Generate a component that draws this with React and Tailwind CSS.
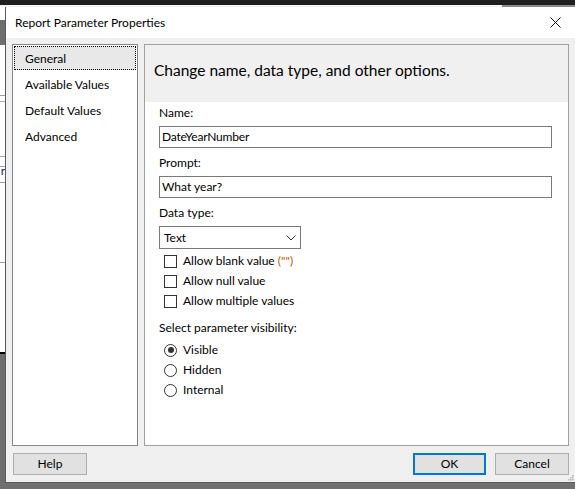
import { useState } from 'react';

const font = { fontFamily: 'Lato, "Noto Sans", sans-serif' };

function Checkbox({ label, extra }) {
  return (
    <div className="flex items-center h-[20px] pl-[5px]">
      <span className="w-[13px] h-[13px] border border-[#333333] bg-white shrink-0" />
      <span className="ml-[6px] text-[12px] leading-[16px] text-black">
        {label}
        {extra && <span className="text-[#c25400]"> {extra}</span>}
      </span>
    </div>
  );
}

function Radio({ label, checked, onClick }) {
  return (
    <div className="flex items-center h-[20px] pl-[5px]" onClick={onClick}>
      <span className="w-[13px] h-[13px] rounded-full border border-[#333333] bg-white shrink-0 flex items-center justify-center">
        {checked && <span className="w-[6px] h-[6px] rounded-full bg-[#333333]" />}
      </span>
      <span className="ml-[6px] text-[12px] leading-[16px] text-black">{label}</span>
    </div>
  );
}

export default function App() {
  const [page, setPage] = useState(0);
  const [visibility, setVisibility] = useState('Visible');
  const pages = ['General', 'Available Values', 'Default Values', 'Advanced'];

  return (
    <div className="w-[575px] h-[489px] bg-[#707070] flex flex-col overflow-hidden" style={font}>
      {/* Host window strip behind the dialog */}
      <div className="h-[5px] bg-[#1f1f1f] shrink-0" />
      <div className="h-[2px] flex shrink-0">
        <div className="w-[502px] bg-[#f3f3f3]" />
        <div className="flex-1 bg-[#8c8c8c]" />
      </div>

      <div className="flex flex-1 min-h-0">
        {/* left edge of the window underneath */}
        <div className="w-[5px] flex flex-col shrink-0 overflow-hidden">
          <div className="h-[13px] bg-white" />
          <div className="h-[25px] bg-[#6e6e6e]" />
          <div className="h-[50px] bg-white" />
          <div className="h-[6px] bg-white border-t border-dashed border-[#a0a0a0]" />
          <div className="h-[55px] bg-white border-t border-[#b0b0b0]" />
          <div className="h-[10px] bg-white border-t border-dashed border-[#a0a0a0]" />
          <div className="h-[16px] bg-white border-t border-dashed border-[#a0a0a0] relative">
            <span className="absolute right-0 top-[-3px] text-[12px] leading-[14px] text-[#1e1e6e]">r</span>
          </div>
          <div className="h-[80px] bg-white border-t border-dashed border-[#a0a0a0]" />
          <div className="h-[90px] bg-white border-t border-dashed border-[#a0a0a0]" />
          <div className="h-[2px] bg-black" />
          <div className="flex-1 bg-[#6e6e6e]" />
        </div>

        {/* Dialog */}
        <div className="flex-1 flex flex-col border-l border-b border-[#5a5a5a] bg-[#f0f0f0] relative">
          <div className="h-[31px] bg-white flex items-center justify-between pl-[9px] pr-[10px] shrink-0">
            <span className="text-[12px] leading-[16px] text-black">Report Parameter Properties</span>
            <svg width="11" height="11" viewBox="0 0 11 11" className="mr-[4px]">
              <path d="M0.5 0.5 L10.5 10.5 M10.5 0.5 L0.5 10.5" stroke="#111" strokeWidth="1" />
            </svg>
          </div>

          <div className="flex-1 flex flex-col px-[6px] pt-[6px] pb-[7px]">
            <div className="flex gap-[6px] flex-1">
              {/* Page list */}
              <div className="w-[126px] bg-white border border-[#828790] p-[1px] flex flex-col gap-[2px]">
                {pages.map((p, i) => (
                  <div
                    key={p}
                    onClick={() => setPage(i)}
                    className={`h-[24px] flex items-center pl-[10px] pt-[2px] text-[12px] leading-[16px] text-black border ${
                      page === i ? 'bg-[#e8e8e8] border-dotted border-black' : 'border-transparent'
                    }`}
                  >
                    {p}
                  </div>
                ))}
              </div>

              {/* Page content */}
              <div className="flex-1 bg-white border border-[#a0a0a0] flex flex-col">
                <div className="h-[57px] bg-[#f0f0f0] pl-[9px] pt-[13px] shrink-0">
                  <span className="text-[15.5px] leading-[20px] text-black">Change name, data type, and other options.</span>
                </div>

                <div className="pl-[14px] pr-[16px] pt-[3px] flex flex-col">
                  <div className="text-[12px] leading-[16px] text-black">Name:</div>
                  <div className="mt-[5px] h-[22px] border border-[#7a7a7a] flex items-center pl-[2px] text-[12px] leading-[16px] text-black tracking-[-0.2px]">
                    DateYearNumber
                  </div>

                  <div className="mt-[7px] text-[12px] leading-[16px] text-black">Prompt:</div>
                  <div className="mt-[5px] h-[22px] border border-[#7a7a7a] flex items-center pl-[2px] text-[12px] leading-[16px] text-black">
                    What year?
                  </div>

                  <div className="mt-[7px] text-[12px] leading-[16px] text-black">Data type:</div>
                  <div className="mt-[5px] w-[142px] h-[23px] border border-[#7a7a7a] bg-white flex items-center justify-between pl-[4px] pr-[4px] text-[12px] leading-[16px] text-black">
                    <span>Text</span>
                    <svg width="10" height="6" viewBox="0 0 10 6">
                      <path d="M0.5 0.5 L5 5 L9.5 0.5" fill="none" stroke="#333" strokeWidth="1" />
                    </svg>
                  </div>

                  <div className="mt-[2px] flex flex-col">
                    <Checkbox label="Allow blank value" extra={'("")'} />
                    <Checkbox label="Allow null value" />
                    <Checkbox label="Allow multiple values" />
                  </div>

                  <div className="mt-[9px] text-[12px] leading-[16px] text-black">Select parameter visibility:</div>
                  <div className="mt-[4px] flex flex-col">
                    {['Visible', 'Hidden', 'Internal'].map((v) => (
                      <Radio key={v} label={v} checked={visibility === v} onClick={() => setVisibility(v)} />
                    ))}
                  </div>
                </div>
              </div>
            </div>

            {/* Buttons */}
            <div className="mt-[7px] flex items-center h-[22px] shrink-0">
              <button className="ml-[1px] w-[74px] h-[22px] bg-[#e1e1e1] border border-[#adadad] text-[12px] leading-[16px] text-black">
                Help
              </button>
              <div className="flex-1" />
              <button className="w-[73px] h-[22px] bg-[#e1e1e1] border-2 border-[#0078d7] text-[12px] leading-[16px] text-black">
                OK
              </button>
              <button className="ml-[9px] w-[74px] h-[22px] bg-[#e1e1e1] border border-[#adadad] text-[12px] leading-[16px] text-black">
                Cancel
              </button>
            </div>
          </div>

          {/* size grip */}
          <svg width="6" height="6" viewBox="0 0 6 6" className="absolute right-[1px] bottom-[1px]">
            <rect x="4" y="0" width="1.5" height="1.5" fill="#b8b8b8" />
            <rect x="2" y="2" width="1.5" height="1.5" fill="#b8b8b8" />
            <rect x="4" y="2" width="1.5" height="1.5" fill="#b8b8b8" />
            <rect x="0" y="4" width="1.5" height="1.5" fill="#b8b8b8" />
            <rect x="2" y="4" width="1.5" height="1.5" fill="#b8b8b8" />
            <rect x="4" y="4" width="1.5" height="1.5" fill="#b8b8b8" />
          </svg>
        </div>
      </div>

      <div className="h-[6px] bg-[#707070] shrink-0" />
    </div>
  );
}
